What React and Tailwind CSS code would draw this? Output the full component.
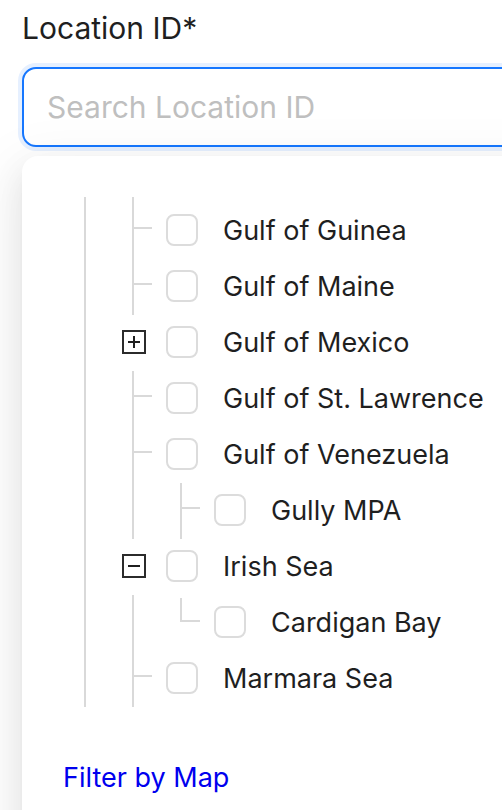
const rows = [
  { level: 1, title: "Gulf of Guinea", sw: "tee" },
  { level: 1, title: "Gulf of Maine", sw: "tee" },
  { level: 1, title: "Gulf of Mexico", sw: "plus" },
  { level: 1, title: "Gulf of St. Lawrence", sw: "tee" },
  { level: 1, title: "Gulf of Venezuela", sw: "tee" },
  { level: 2, title: "Gully MPA", sw: "tee" },
  { level: 1, title: "Irish Sea", sw: "minus" },
  { level: 2, title: "Cardigan Bay", sw: "end" },
  { level: 1, title: "Marmara Sea", sw: "tee" },
];

function Indent() {
  return (
    <div className="relative h-full w-[48px] shrink-0">
      <div className="absolute left-[23px] top-0 h-full w-[2px] bg-[#d9d9d9]" />
    </div>
  );
}

function Switcher({ type }) {
  return (
    <div className="relative h-full w-[48px] shrink-0">
      {type === "tee" && (
        <>
          <div className="absolute left-[23px] top-0 h-full w-[2px] bg-[#d9d9d9]" />
          <div className="absolute left-[24px] top-[24px] h-[2px] w-[19px] bg-[#d9d9d9]" />
        </>
      )}
      {type === "end" && (
        <>
          <div className="absolute left-[23px] top-[3px] h-[24px] w-[2px] bg-[#d9d9d9]" />
          <div className="absolute left-[23px] top-[25px] h-[2px] w-[20px] bg-[#d9d9d9]" />
        </>
      )}
      {(type === "plus" || type === "minus") && (
        <div className="absolute left-[13px] top-[15px] flex h-[24px] w-[24px] items-center justify-center border-[2.5px] border-[#2b2b2b]">
          <div className="relative h-[12px] w-[12px]">
            <div className="absolute left-0 top-[5px] h-[2px] w-[12px] bg-[#1f1f1f]" />
            {type === "plus" && <div className="absolute left-[5px] top-0 h-[12px] w-[2px] bg-[#1f1f1f]" />}
          </div>
        </div>
      )}
    </div>
  );
}

function TreeRow({ row }) {
  return (
    <div className="flex h-[56px] items-start">
      <Indent />
      {row.level === 2 && <Indent />}
      <Switcher type={row.sw} />
      <div className="ml-[9px] mt-[11px] h-[32px] w-[32px] shrink-0 rounded-[8px] border-2 border-[#dcdcdc] bg-white" />
      <span className="ml-[25px] whitespace-nowrap text-[27px] leading-[56px] text-[#1f1f1f]">{row.title}</span>
    </div>
  );
}

export default function App() {
  return (
    <div className="relative h-[810px] w-[502px] overflow-hidden bg-white font-['Inter',sans-serif]">
      <div className="w-[660px] pl-[22px] pt-[8px]">
        <div className="text-[30px] leading-[40px] text-[#1f1f1f]">Location ID*</div>
        <div className="mt-[19px] flex h-[80px] items-center rounded-[14px] border-2 border-[#1677ff] bg-white pl-[23px] shadow-[0_0_0_4px_#e6f0ff]">
          <span className="text-[30px] text-[#bfbfbf]">Search Location ID</span>
        </div>
        <div className="relative z-10 mt-[9px] h-[720px] rounded-tl-[16px] bg-white pl-[39px] pt-[41px] shadow-[0_12px_32px_0_rgba(0,0,0,0.08),0_6px_12px_-8px_rgba(0,0,0,0.12),0_18px_56px_16px_rgba(0,0,0,0.05)]">
          <div className="flex h-[6px]">
            <Indent />
            <Indent />
          </div>
          {rows.map((row, i) => (
            <TreeRow key={i} row={row} />
          ))}
          <a href="#" className="mt-[53px] ml-[2px] block text-[27px] leading-[36px] text-[#0000ee]">
            Filter by Map
          </a>
        </div>
      </div>
    </div>
  );
}
